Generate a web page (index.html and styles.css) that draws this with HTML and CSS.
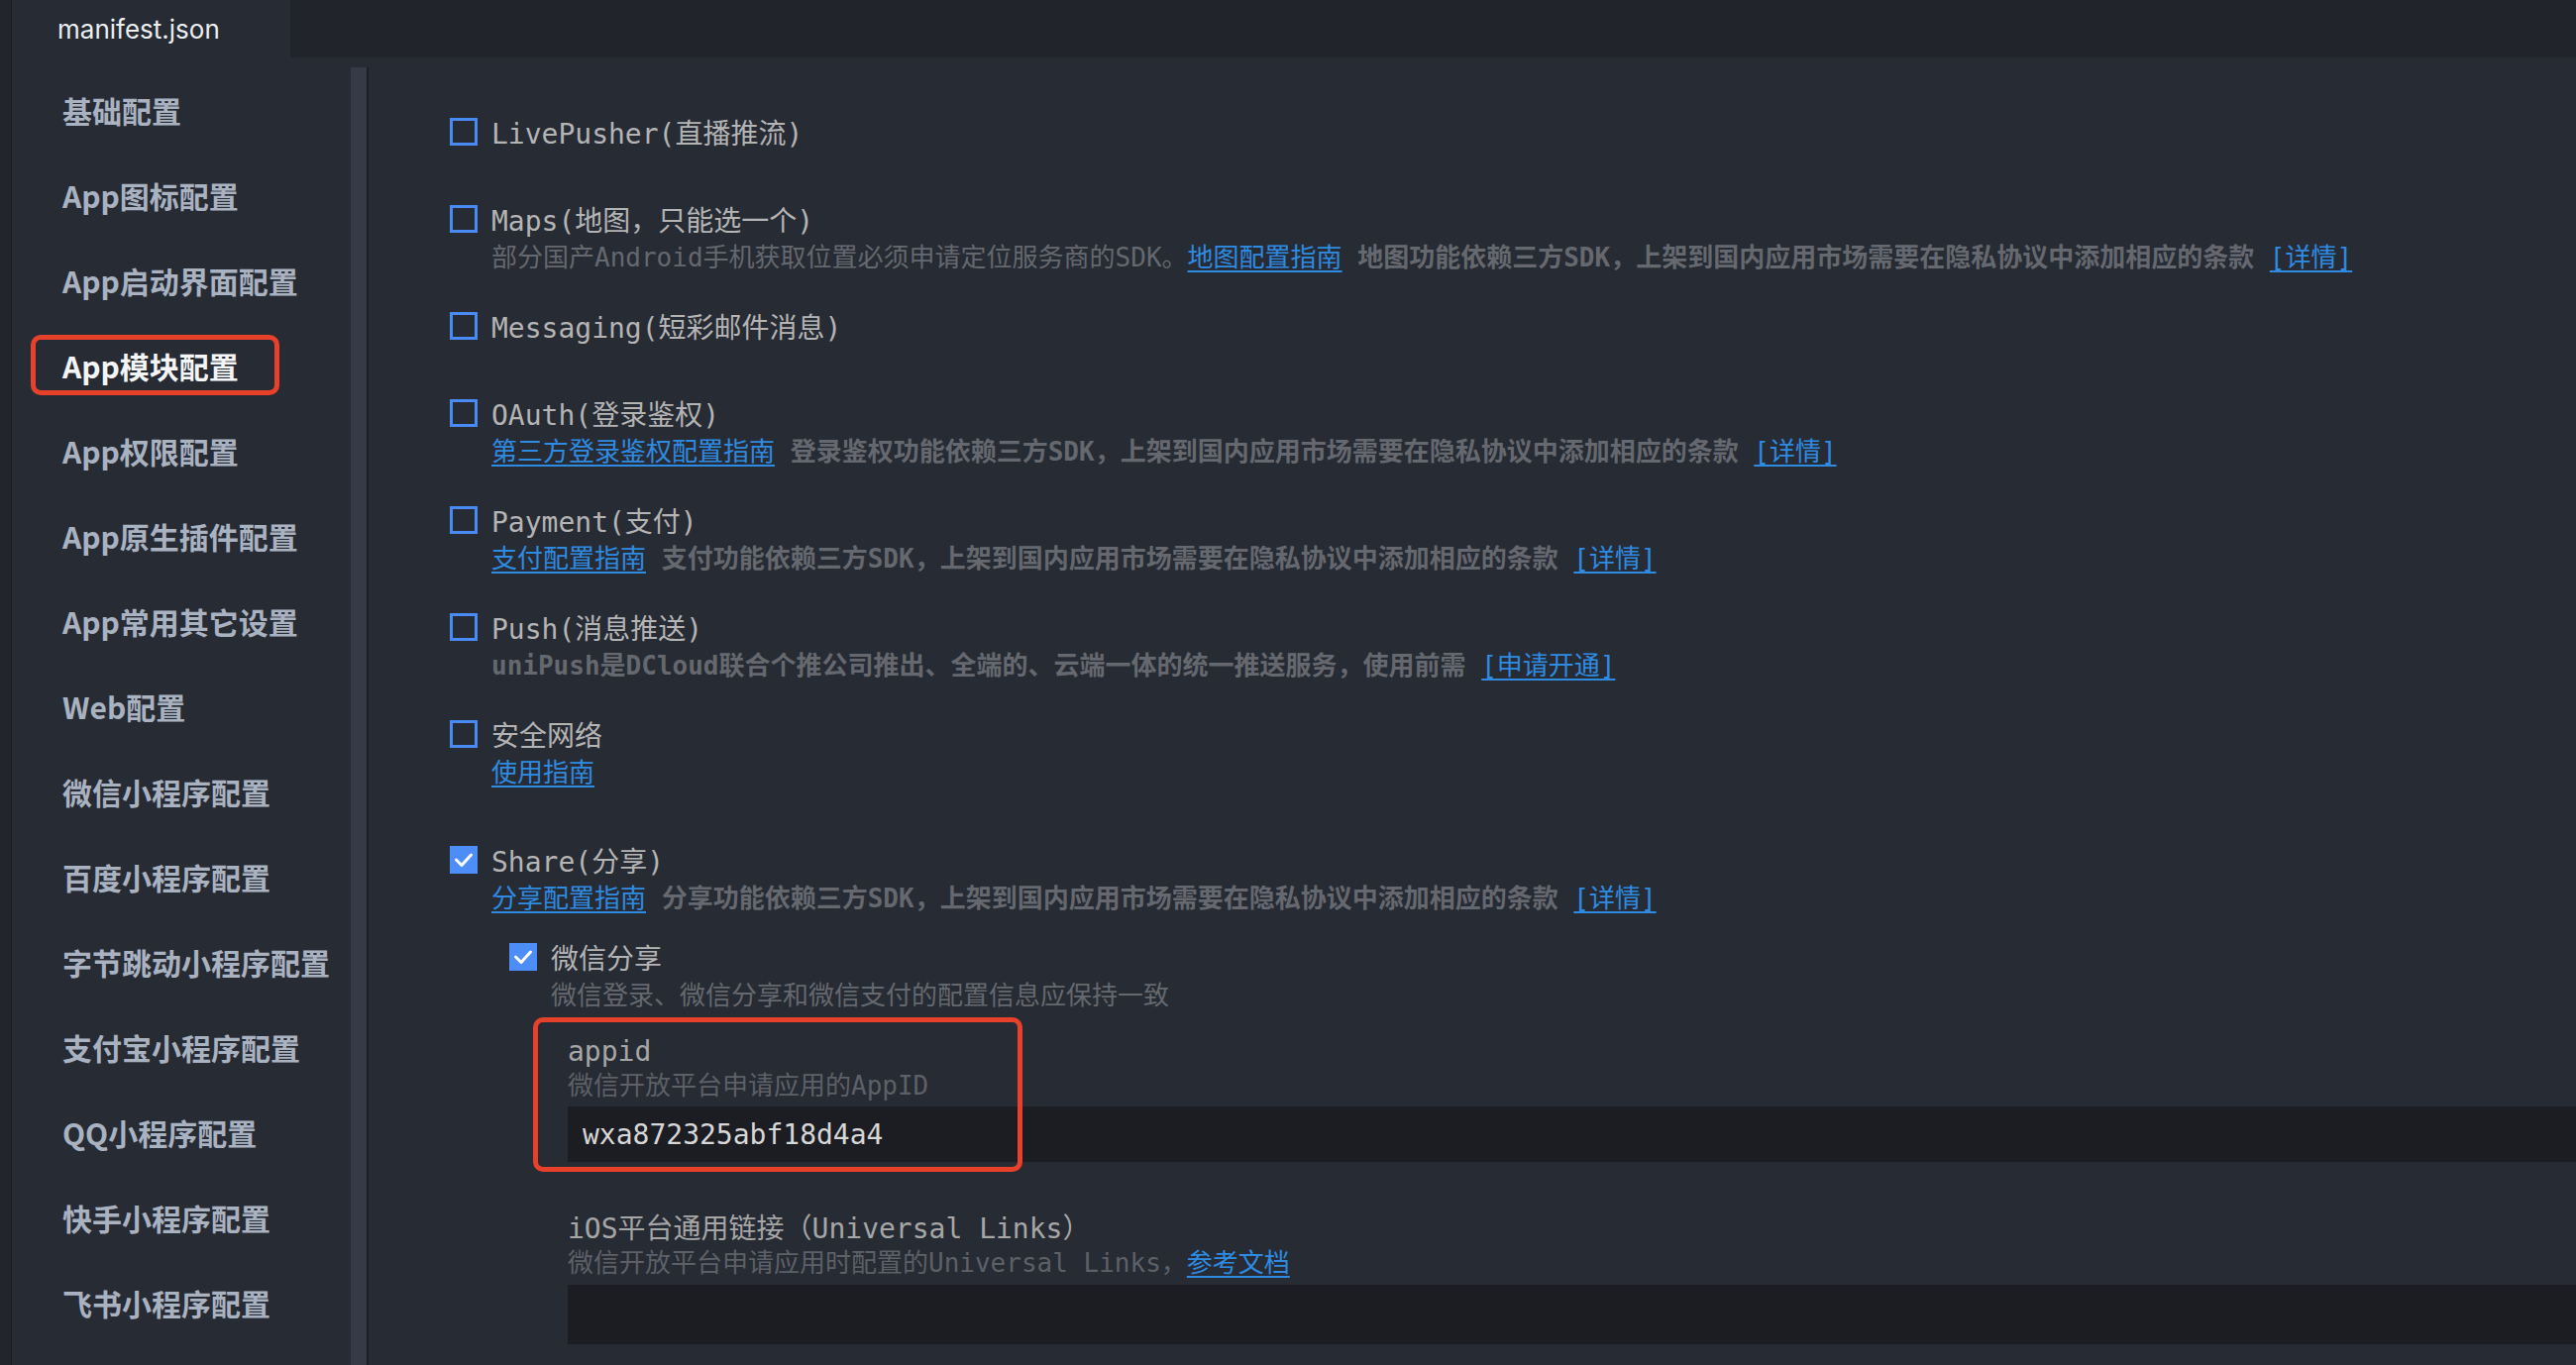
FILE: index.html
```html
<!DOCTYPE html>
<html lang="zh-CN">
    <head>
        <meta charset="UTF-8" />
        <meta name="viewport" content="width=device-width, initial-scale=1.0" />
        <title>manifest.json</title>

        <link rel="stylesheet" href="styles.css">
    </head>

    <body>
        <div class="window">
            <div class="gutter"></div>

            <div class="editor">
                <div class="tabs">
                    <div class="tab">manifest.json</div>
                </div>

                <div class="panes">
                    <nav class="sidebar">
                        <a class="nav-item">基础配置</a>
                        <a class="nav-item">App图标配置</a>
                        <a class="nav-item">App启动界面配置</a>
                        <a class="nav-item active">App模块配置</a>
                        <a class="nav-item">App权限配置</a>
                        <a class="nav-item">App原生插件配置</a>
                        <a class="nav-item">App常用其它设置</a>
                        <a class="nav-item">Web配置</a>
                        <a class="nav-item">微信小程序配置</a>
                        <a class="nav-item">百度小程序配置</a>
                        <a class="nav-item">字节跳动小程序配置</a>
                        <a class="nav-item">支付宝小程序配置</a>
                        <a class="nav-item">QQ小程序配置</a>
                        <a class="nav-item">快手小程序配置</a>
                        <a class="nav-item">飞书小程序配置</a>
                    </nav>
                    <div class="scroll-track"></div>

                    <main class="content">
                        <div class="module">
                            <div class="module-head">
                                <span class="checkbox"></span>
                                <span class="module-name">LivePusher(直播推流)</span>
                            </div>
                        </div>

                        <div class="module">
                            <div class="module-head">
                                <span class="checkbox"></span>
                                <span class="module-name">Maps(地图，只能选一个)</span>
                            </div>
                            <div class="module-desc">部分国产Android手机获取位置必须申请定位服务商的SDK。<a class="link">地图配置指南</a> <b>地图功能依赖三方SDK，上架到国内应用市场需要在隐私协议中添加相应的条款</b> <a class="link">[详情]</a></div>
                        </div>

                        <div class="module">
                            <div class="module-head">
                                <span class="checkbox"></span>
                                <span class="module-name">Messaging(短彩邮件消息)</span>
                            </div>
                        </div>

                        <div class="module">
                            <div class="module-head">
                                <span class="checkbox"></span>
                                <span class="module-name">OAuth(登录鉴权)</span>
                            </div>
                            <div class="module-desc"><a class="link">第三方登录鉴权配置指南</a> <b>登录鉴权功能依赖三方SDK，上架到国内应用市场需要在隐私协议中添加相应的条款</b> <a class="link">[详情]</a></div>
                        </div>

                        <div class="module">
                            <div class="module-head">
                                <span class="checkbox"></span>
                                <span class="module-name">Payment(支付)</span>
                            </div>
                            <div class="module-desc"><a class="link">支付配置指南</a> <b>支付功能依赖三方SDK，上架到国内应用市场需要在隐私协议中添加相应的条款</b> <a class="link">[详情]</a></div>
                        </div>

                        <div class="module">
                            <div class="module-head">
                                <span class="checkbox"></span>
                                <span class="module-name">Push(消息推送)</span>
                            </div>
                            <div class="module-desc"><b>uniPush是DCloud联合个推公司推出、全端的、云端一体的统一推送服务，使用前需</b> <a class="link">[申请开通]</a></div>
                        </div>

                        <div class="module">
                            <div class="module-head">
                                <span class="checkbox"></span>
                                <span class="module-name">安全网络</span>
                            </div>
                            <div class="module-desc"><a class="link">使用指南</a></div>
                        </div>

                        <div class="module module-share">
                            <div class="module-head">
                                <span class="checkbox checked">
                                    <svg viewBox="0 0 28 28" width="28" height="28"><polyline points="6.5,14 12,19.5 21.5,9" /></svg>
                                </span>
                                <span class="module-name">Share(分享)</span>
                            </div>
                            <div class="module-desc"><a class="link">分享配置指南</a> <b>分享功能依赖三方SDK，上架到国内应用市场需要在隐私协议中添加相应的条款</b> <a class="link">[详情]</a></div>

                            <div class="submodule">
                                <div class="module-head">
                                    <span class="checkbox checked">
                                        <svg viewBox="0 0 28 28" width="28" height="28"><polyline points="6.5,14 12,19.5 21.5,9" /></svg>
                                    </span>
                                    <span class="module-name">微信分享</span>
                                </div>
                                <div class="module-desc">微信登录、微信分享和微信支付的配置信息应保持一致</div>

                                <div class="fields">
                                    <div class="field field-marked">
                                        <div class="field-label">appid</div>
                                        <div class="field-desc">微信开放平台申请应用的AppID</div>
                                        <input class="field-input" type="text" value="wxa872325abf18d4a4">
                                    </div>

                                    <div class="field">
                                        <div class="field-label">iOS平台通用链接（Universal Links）</div>
                                        <div class="field-desc">微信开放平台申请应用时配置的Universal Links，<a class="link">参考文档</a></div>
                                        <input class="field-input tall" type="text" value="">
                                    </div>
                                </div>
                            </div>
                        </div>
                    </main>
                </div>
            </div>
        </div>
    </body>
</html>
```

FILE: styles.css
```css
/* Dark editor theme: a tab strip on top, a settings nav on the left and the module list on the right */
*,
*::before,
*::after {
    box-sizing: border-box;
}

html,
body {
    margin: 0;
    height: 100%;
}

body {
    background-color: #272b34;
    overflow: hidden;
}

.window {
    display: flex;
    height: 100vh;
}

.gutter {
    width: 12px;
    flex: none;
    background-color: #22252b;
    border-right: 1px solid #191b1f;
}

.editor {
    flex: 1;
    display: flex;
    flex-direction: column;
    min-width: 0;
}

/* Tab strip */
.tabs {
    height: 58px;
    flex: none;
    display: flex;
    background-color: #21242a;
}

.tab {
    width: 281px;
    display: flex;
    align-items: center;
    padding-left: 46px;
    background-color: #272b33;
    color: #eceef0;
    font-family: Inter, "Noto Sans", sans-serif;
    font-size: 26px;
}

.panes {
    flex: 1;
    display: flex;
    min-height: 0;
}

/* Settings navigation */
.sidebar {
    width: 342px;
    flex: none;
    display: flex;
    flex-direction: column;
    padding-top: 10px;
    background-color: #272b33;
}

.nav-item {
    position: relative;
    height: 86px;
    display: flex;
    align-items: center;
    padding-left: 51px;
    color: #a9b2c1;
    font-family: "Noto Sans CJK SC", sans-serif;
    font-size: 30px;
    font-weight: 700;
    white-space: nowrap;
}

.nav-item.active {
    color: #f4f5f7;
}

/* red marker drawn round the current page */
.nav-item.active::after {
    content: "";
    position: absolute;
    left: 19px;
    top: 12px;
    width: 251px;
    height: 61px;
    border: 5px solid #e8412b;
    border-radius: 10px;
}

.scroll-track {
    width: 18px;
    flex: none;
    margin-top: 10px;
    background-color: #343a46;
    border-right: 2px solid #1c1f24;
}

/* Module list */
.content {
    flex: 1;
    min-width: 0;
    padding: 46px 0 0 82px;
    font-family: "DejaVu Sans Mono", "Noto Sans CJK SC", monospace;
}

.module {
    margin-bottom: 30px;
}

/* the share group sits a little further down than the rest */
.module-share {
    padding-top: 19px;
}

.module-head {
    height: 58px;
    display: flex;
    align-items: center;
    gap: 14px;
}

.checkbox {
    width: 28px;
    height: 28px;
    flex: none;
    border: 3px solid #4a8af5;
}

.checkbox.checked {
    border: 0;
    background-color: #4d8df7;
}

.checkbox svg {
    display: block;
    fill: none;
    stroke: #ffffff;
    stroke-width: 3;
    stroke-linecap: round;
    stroke-linejoin: round;
}

.module-name {
    font-size: 28px;
    color: #b4b4b4;
    white-space: nowrap;
}

.module-desc {
    padding-left: 42px;
    font-size: 26px;
    line-height: 20px;
    color: #65686e;
    white-space: nowrap;
}

.module-desc b {
    font-weight: 700;
}

.link {
    color: #2f8be2;
    text-decoration: underline;
    text-decoration-thickness: 2px;
    text-underline-offset: 4px;
}

.submodule {
    margin: 20px 0 0 60px;
}

/* Fields of the WeChat share module */
.fields {
    margin-top: 31px;
    padding-left: 59px;
}

.field {
    position: relative;
}

.field + .field {
    margin-top: 52px;
}

.field-label {
    font-size: 28px;
    line-height: 32px;
    color: #a6a6a6;
    white-space: nowrap;
}

.field-desc {
    font-size: 26px;
    line-height: 36px;
    color: #5d6066;
    white-space: nowrap;
}

.field-input {
    display: block;
    width: 100%;
    height: 56px;
    margin-top: 3px;
    padding: 0 15px;
    border: 0;
    outline: none;
    background-color: #1c1d22;
    color: #d7d7d7;
    font-family: "DejaVu Sans Mono", monospace;
    font-size: 28px;
}

.field-input.tall {
    height: 60px;
    margin-top: 4px;
}

/* red marker drawn round the appid field */
.field-marked::after {
    content: "";
    position: absolute;
    left: -35px;
    top: -19px;
    width: 494px;
    height: 156px;
    border: 5px solid #e8412b;
    border-radius: 10px;
    pointer-events: none;
}
```
